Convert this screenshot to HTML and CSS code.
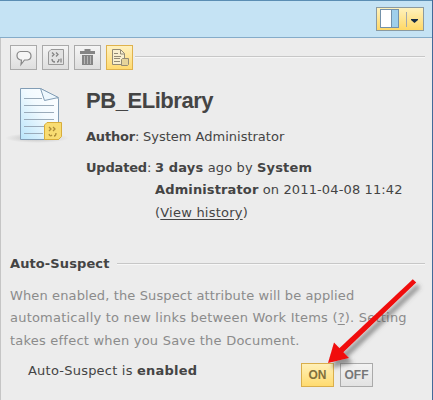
FILE: index.html
```html
<!DOCTYPE html>
<html lang="en">
<head>
<meta charset="utf-8">
<title>PB_ELibrary</title>
<link rel="stylesheet" href="styles.css">
</head>
<body>
<div class="panel">
  <header class="topbar">
    <button class="layout-button" aria-label="Layout">
      <svg width="48" height="24" viewBox="0 0 48 24">
        <rect x="4.500" y="2.500" width="18" height="18" fill="#fff" stroke="#7391aa"/>
        <path d="M15 3h7v17h-7z" fill="#9fcfeb"/>
        <path d="M15.500 3v17" stroke="#7391aa"/>
        <path d="M30.500 5v15" stroke="#a4a8ad"/>
        <path d="M35 12h7v1l-3.500 3-3.500-3z" fill="#172c45"/>
      </svg>
    </button>
  </header>
  <main class="content">
    <nav class="toolbar">
      <button class="tool" aria-label="Comment">
        <svg viewBox="0 0 25 23"><path d="M9.500 5.500h7q3.500 1 3.500 4.500t-3.500 4h-3L10 18.500l.5-4.500h-1Q6 13 6 9.500t3.500-4z" fill="#f5f5f5" stroke="#888" stroke-width="1.200"/></svg>
      </button>
      <button class="tool" aria-label="Work items">
        <svg viewBox="0 0 25 23"><path d="M8 3.500h12.500v15H5.500V6z" fill="#e2e2e2" stroke="#999"/><path d="M9 6.500l2 2-2 2M13 6.500l2 2-2 2M9 13q0 3 3 3M14 16q2 0 2-3M18 12.500v4" fill="none" stroke="#858585" stroke-width="1.300"/></svg>
      </button>
      <button class="tool" aria-label="Delete">
        <svg viewBox="0 0 25 23"><path d="M5 5h15v3H5zM9.500 3h6v2h-6zM7 9h11v10H7z" fill="#858585"/><path d="M9.500 10v8M12.500 10v8M15.500 10v8" stroke="#b5b5b5"/></svg>
      </button>
      <button class="tool tool-active" aria-label="Document properties">
        <svg viewBox="0 0 25 23"><path d="M5.500 3.500h8l4 4v11h-12z" fill="#f8efd0" stroke="#938b76"/><path d="M13.500 4v4h4M7 7.500h4M7 10.500h7M7 12.500h6M7 15.500h6" fill="none" stroke="#938b76"/><path d="M15.500 12.500h6v6l-1 1h-6v-6z" fill="#e6d49b" stroke="#938b76"/></svg>
      </button>
      <span class="rule toolbar-rule"></span>
    </nav>
    <section class="summary">
      <svg class="document-icon" width="76" height="66" viewBox="0 0 76 66">
        <defs>
          <linearGradient id="paper" x1="1" y1="0" x2="0" y2="1"><stop stop-color="#fff"/><stop offset=".45" stop-color="#f2faff"/><stop offset="1" stop-color="#b9e5fa"/></linearGradient>
          <radialGradient id="shade"><stop stop-color="#aaa" stop-opacity=".7"/><stop offset="1" stop-color="#aaa" stop-opacity="0"/></radialGradient>
        </defs>
        <ellipse cx="37" cy="55" rx="32" ry="5" fill="url(#shade)"/>
        <path d="M20.500 5.500h20l18 10v41h-38z" fill="url(#paper)" stroke="#829db5"/>
        <path d="M40.500 5.500l4 12 14-3z" fill="#edf7fd" stroke="#829db5"/>
        <path d="M24 15.500h18M24 22.500h30M24 29.500h30M24 36.500h30M24 43.500h20M24 50.500h19" stroke="#9aabba"/>
        <path d="M47 39.500h14.500v14l-3 3h-14V42z" fill="#f8dc72" stroke="#d8ad3a"/>
        <path d="M49 44l2 2-2 2M53 44l2 2-2 2M49 51q1 3 3 1M54 53q2 0 2-3" fill="none" stroke="#ad8c38" stroke-width="1.300"/>
      </svg>
      <div class="details">
        <h1>PB_ELibrary</h1>
        <div class="field author"><div class="label"><b>Author</b>:</div><div class="value">System Administrator</div></div>
        <div class="field"><div class="label"><b>Updated</b>:</div>
          <div class="value">
            <div class="line-age"><b>3 days</b> ago by <b>System</b></div>
            <div class="line-date"><b>Administrator</b> on 2011-04-08 11:42</div>
            <div class="line-link">(<span class="link">View history</span>)</div>
          </div>
        </div>
      </div>
    </section>
    <section class="suspect">
      <h2><span>Auto-Suspect</span><span class="rule"></span></h2>
      <div class="description">
        <div class="desc-first">When enabled, the Suspect attribute will be applied</div>
        <div class="desc-second">automatically to new links between Work Items (<span class="link">?</span>). Setting</div>
        <div class="desc-third">takes effect when you Save the Document.</div>
      </div>
      <div class="state">
        <div class="state-text">Auto-Suspect is <b>enabled</b></div>
        <button class="switch switch-on">ON</button>
        <button class="switch switch-off">OFF</button>
      </div>
    </section>
  </main>
  <svg class="arrow" width="110" height="100" viewBox="0 0 110 100">
    <defs><filter id="soft" x="-20%" y="-20%" width="140%" height="140%"><feDropShadow dx="4" dy="5" stdDeviation="2" flood-color="#555" flood-opacity=".6"/></filter></defs>
    <g filter="url(#soft)" fill="#f00d0d"><path d="M8 88l6-20.500 15 15.500z"/><path d="M92.800 4.200l3.400 3.400L22.500 78l-4-4z"/></g>
  </svg>
</div>
</body>
</html>
```
FILE: styles.css
```css
* { box-sizing: border-box; }
body { margin: 0; overflow: hidden; }
.panel {
  position: relative;
  width: 433px;
  height: 400px;
  background: #ececec;
  border-left: 1px solid #c5c5c5;
  border-right: 1px solid #426a99;
  color: #444;
  font: 13px/22.5px "DejaVu Sans", sans-serif;
  white-space: nowrap;
}
button { display: block; padding: 0; font: inherit; }
.topbar {
  display: flex;
  justify-content: flex-end;
  height: 38px;
  margin-left: -1px;
  padding: 6px 8px 0 0;
  background: #c5e3f4;
  border-top: 1px solid #5b8eb3;
  border-bottom: 1px solid #85acc9;
}
.layout-button {
  width: 48px;
  height: 24px;
  border: 1px solid #8b9aa0;
  background: linear-gradient(#fff2bd, #ffd866);
}
.layout-button svg { display: block; margin: -1px; }
.content { padding: 7px 7px 0 9px; }
.toolbar { display: flex; height: 25px; }
.tool {
  flex: none;
  width: 27px;
  height: 25px;
  margin-right: 5px;
  border: 1px solid #aaa;
  background: linear-gradient(#f5f5f5, #dedede);
}
.tool svg { display: block; width: 25px; height: 23px; }
.tool-active { border-color: #dfb24d; background: linear-gradient(#fff1bf, #ffda70); }
.rule { height: 2px; flex: 1; border-top: 1px solid #c7c7c7; border-bottom: 1px solid #f7f7f7; }
.toolbar-rule { margin-top: 11px; margin-left: -3px; }
.summary { display: flex; height: 183px; }
.document-icon { flex: none; margin: 13px 0 0 -10px; }
.details { padding: 18px 0 0 10px; }
h1 { margin: 0; height: 37.5px; font: bold 22px/26px "Liberation Sans", sans-serif; letter-spacing: -.45px; }
.field { display: flex; }
.author { height: 31px; }
.label { width: 69px; letter-spacing: -.2px; }
.author .label { width: 57px; }
.line-age { letter-spacing: .15px; }
.line-date { letter-spacing: .13px; }
.line-link { letter-spacing: .22px; }
.suspect { height: 140px; }
h2 { display: flex; align-items: center; gap: 8px; margin: 0; height: 22px; font: bold 13px/22px "DejaVu Sans", sans-serif; letter-spacing: .1px; }
.description { padding-top: 9.5px; color: #8b8b8b; }
.desc-first { letter-spacing: .12px; }
.desc-second { letter-spacing: .21px; }
.desc-third { letter-spacing: .22px; }
.link { text-decoration: underline; text-underline-offset: 2px; }
.state { display: flex; padding: 8px 0 0 18px; }
.state-text { width: 273px; letter-spacing: .22px; }
.switch {
  width: 33px;
  height: 24px;
  margin-top: 3px;
  border: 1px solid #aaa;
  background: linear-gradient(#f3f3f3, #e2e2e2);
  color: #777;
  font: bold 12px/22px "Liberation Sans", sans-serif;
}
.switch-on { margin-right: 6px; border-color: #d9ae4c; background: linear-gradient(#fff0b8, #ffdb70); color: #81703c; }
.arrow { position: absolute; left: 319px; top: 275px; }
```
